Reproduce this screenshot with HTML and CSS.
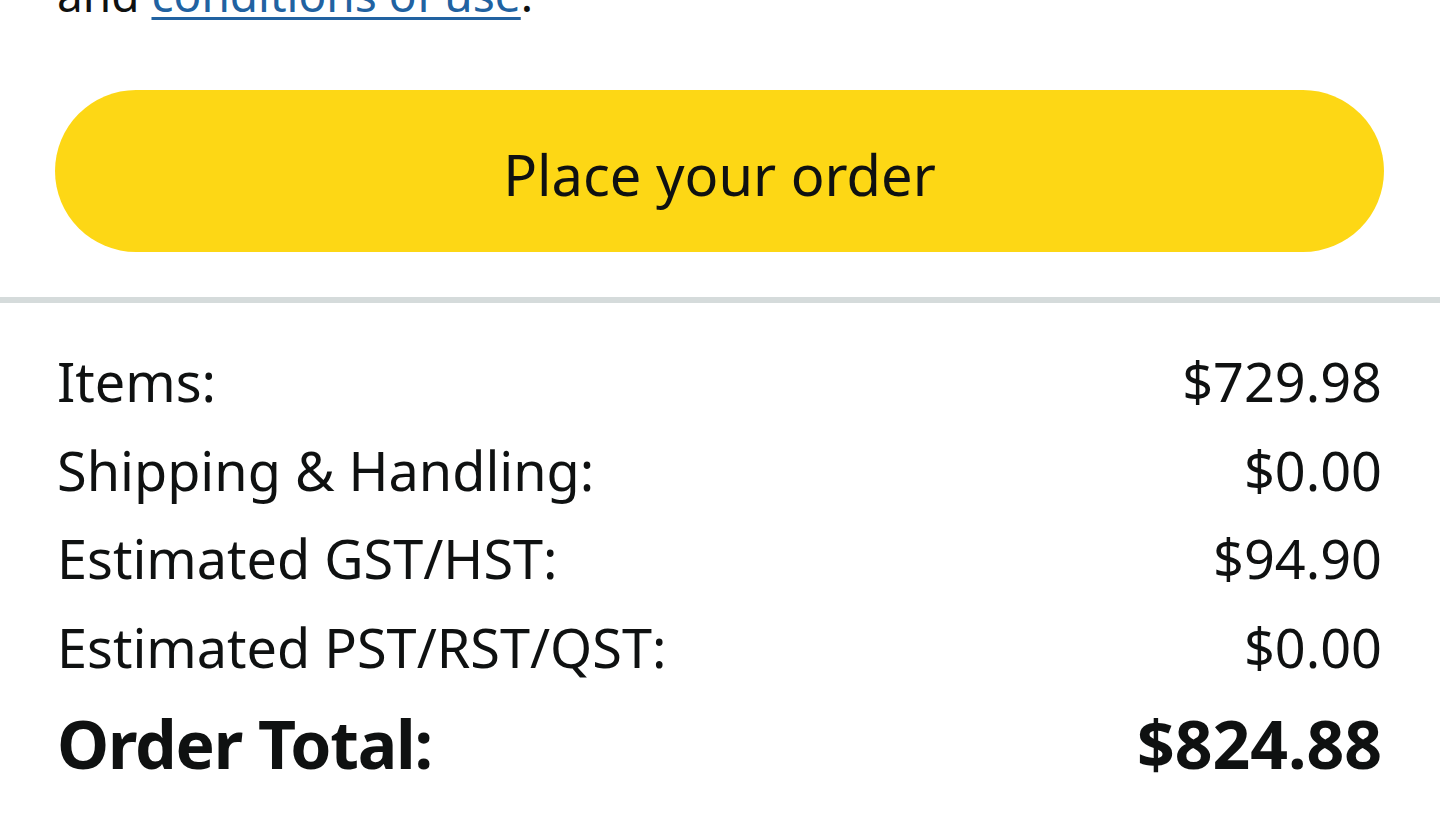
FILE: index.html
```html
<!DOCTYPE html>
<html lang="en">
<head>
<meta charset="utf-8">
<title>Place your order</title>
<link rel="stylesheet" href="styles.css">
</head>
<body>
<main class="checkout">
  <section class="place-order">
    <p class="terms">and <a href="#" class="terms-link">conditions of use</a>.</p>
    <button class="place-btn" type="button">Place your order</button>
  </section>
  <hr class="divider">
  <section class="summary">
    <div class="row"><span>Items:</span><span>$729.98</span></div>
    <div class="row"><span>Shipping &amp; Handling:</span><span>$0.00</span></div>
    <div class="row"><span>Estimated GST/HST:</span><span>$94.90</span></div>
    <div class="row"><span>Estimated PST/RST/QST:</span><span>$0.00</span></div>
    <div class="row total"><span class="total-label">Order Total:</span><span>$824.88</span></div>
  </section>
</main>
</body>
</html>
```
FILE: styles.css
```css
html, body {
  margin: 0;
  padding: 0;
  background: #ffffff;
}
body {
  font-family: "Noto Sans", "Open Sans", sans-serif;
  color: #0f1111;
  overflow: hidden;
}
.checkout {
  display: flex;
  flex-direction: column;
}
.place-order {
  padding: 0 56px 0 55px;
  display: flex;
  flex-direction: column;
}
.terms {
  margin: -36px 0 0 2px;
  font-size: 46px;
  line-height: 60px;
}
.terms-link {
  color: #2162a1;
  text-decoration: underline;
  text-decoration-thickness: 3px;
  text-underline-offset: 5px;
}
.place-btn {
  margin-top: 66px;
  height: 162px;
  border: none;
  border-radius: 81px;
  background: #fdd715;
  color: #0f1111;
  font-family: "Noto Sans", "Open Sans", sans-serif;
  font-size: 56px;
  padding: 6px 0 0;
  cursor: pointer;
}
.divider {
  margin: 45px 0 0;
  border: none;
  height: 6px;
  background: #d5dbdb;
}
.summary {
  padding: 34px 58px 0 57px;
  display: flex;
  flex-direction: column;
}
.row {
  display: flex;
  justify-content: space-between;
  font-size: 54px;
  line-height: 88.5px;
}
.row.total {
  font-weight: 700;
  font-size: 66px;
  line-height: 100px;
  margin-top: 2px;
}
.total-label {
  letter-spacing: -1.2px;
}
```
